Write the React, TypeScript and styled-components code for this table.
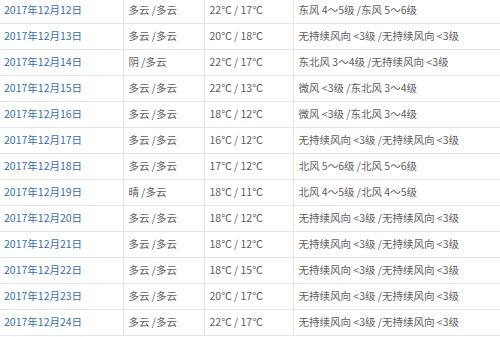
import React from 'react';
import styled, { createGlobalStyle } from 'styled-components';

const GlobalStyle = createGlobalStyle`
  html, body {
    margin: 0;
    padding: 0;
    background: #ffffff;
    overflow: hidden;
  }
`

const Table = styled.table`
  width: 500px;
  margin-top: -3px;
  border-collapse: collapse;
  table-layout: fixed;
  font-family: "Noto Sans CJK SC", "Noto Sans", sans-serif;
  font-size: 10.5px;
`

const Col = styled.col<{ $width: number }>`
  width: ${p => p.$width}px;
`

const Row = styled.tr`
  height: 26px;
  border-bottom: 1px solid #e6e6e6;
`

const Cell = styled.td<{ $link?: boolean }>`
  padding: 0 0 0 5px;
  border-right: 1px solid #e6e6e6;
  color: ${p => (p.$link ? '#3a6db3' : '#606060')};
  white-space: nowrap;
  overflow: hidden;
  vertical-align: middle;
  line-height: 16px;

  &:first-child {
    padding-left: 4px;
  }
  &:last-child {
    border-right: none;
  }
`

interface Day {
  date: string;
  weather: string;
  temp: string;
  wind: string;
}

const days: Day[] = [
  { date: '2017年12月12日', weather: '多云 /多云', temp: '22℃ / 17℃', wind: '东风 4～5级 /东风 5～6级' },
  { date: '2017年12月13日', weather: '多云 /多云', temp: '20℃ / 18℃', wind: '无持续风向 <3级 /无持续风向 <3级' },
  { date: '2017年12月14日', weather: '阴 /多云', temp: '22℃ / 17℃', wind: '东北风 3～4级 /无持续风向 <3级' },
  { date: '2017年12月15日', weather: '多云 /多云', temp: '22℃ / 13℃', wind: '微风 <3级 /东北风 3～4级' },
  { date: '2017年12月16日', weather: '多云 /多云', temp: '18℃ / 12℃', wind: '微风 <3级 /东北风 3～4级' },
  { date: '2017年12月17日', weather: '多云 /多云', temp: '16℃ / 12℃', wind: '无持续风向 <3级 /无持续风向 <3级' },
  { date: '2017年12月18日', weather: '多云 /多云', temp: '17℃ / 12℃', wind: '北风 5～6级 /北风 5～6级' },
  { date: '2017年12月19日', weather: '晴 /多云', temp: '18℃ / 11℃', wind: '北风 4～5级 /北风 4～5级' },
  { date: '2017年12月20日', weather: '多云 /多云', temp: '18℃ / 12℃', wind: '无持续风向 <3级 /无持续风向 <3级' },
  { date: '2017年12月21日', weather: '多云 /多云', temp: '18℃ / 12℃', wind: '无持续风向 <3级 /无持续风向 <3级' },
  { date: '2017年12月22日', weather: '多云 /多云', temp: '18℃ / 15℃', wind: '无持续风向 <3级 /无持续风向 <3级' },
  { date: '2017年12月23日', weather: '多云 /多云', temp: '20℃ / 17℃', wind: '无持续风向 <3级 /无持续风向 <3级' },
  { date: '2017年12月24日', weather: '多云 /多云', temp: '22℃ / 17℃', wind: '无持续风向 <3级 /无持续风向 <3级' },
];

const App: React.FunctionComponent = () => {
  return <>
    <GlobalStyle />
    <Table>
      <colgroup>
        <Col $width={123} />
        <Col $width={81} />
        <Col $width={89} />
        <Col $width={207} />
      </colgroup>
      <tbody>
        {days.map(d => (
          <Row key={d.date}>
            <Cell $link>{d.date}</Cell>
            <Cell>{d.weather}</Cell>
            <Cell>{d.temp}</Cell>
            <Cell>{d.wind}</Cell>
          </Row>
        ))}
      </tbody>
    </Table>
  </>
}

export default App;
